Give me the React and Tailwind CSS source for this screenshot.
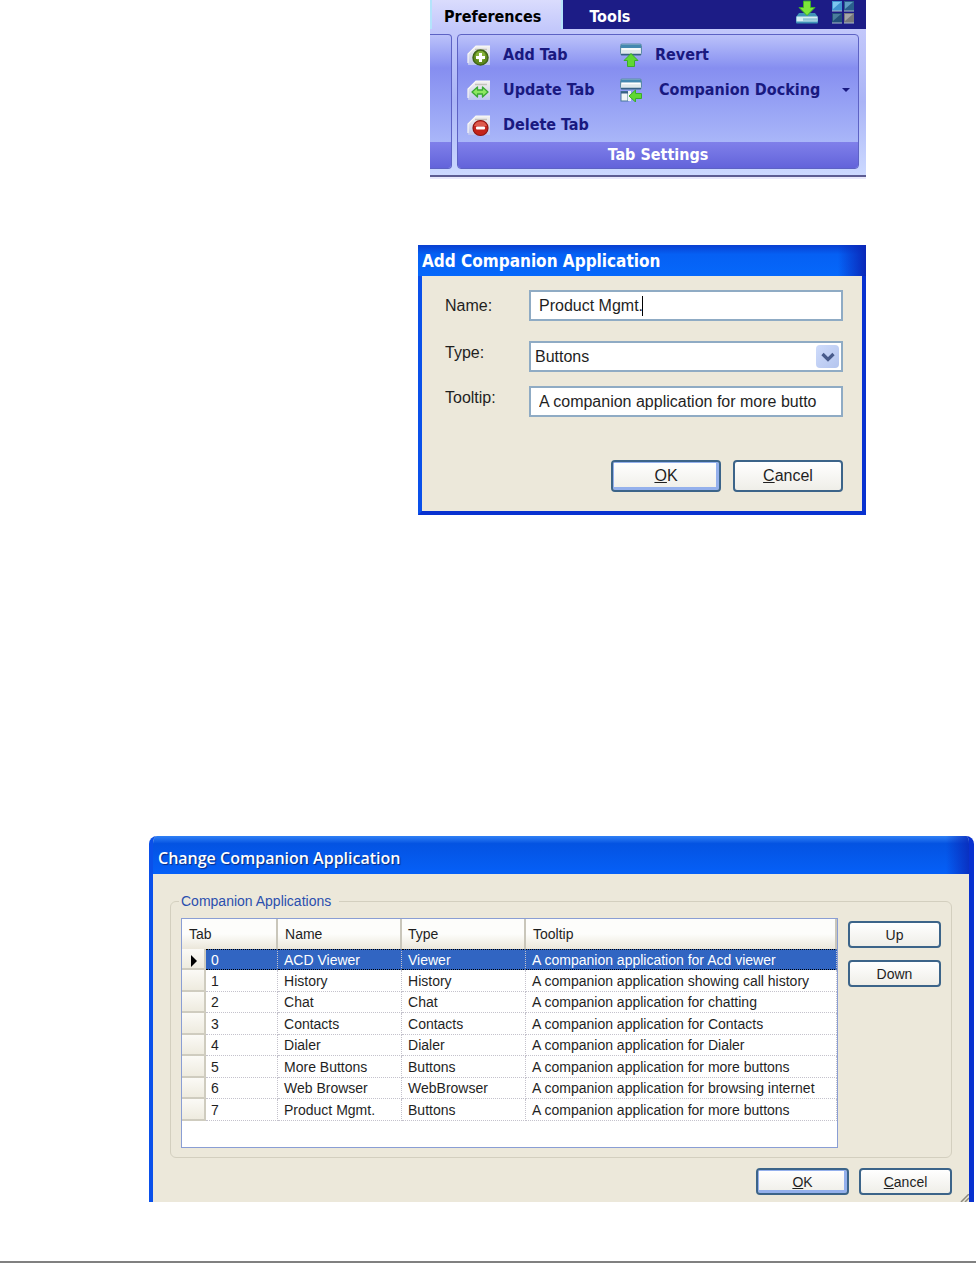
import clsx from "clsx";

const companionApps = [
  { name: "ACD Viewer", type: "Viewer", tooltip: "A companion application for Acd viewer" },
  { name: "History", type: "History", tooltip: "A companion application showing call history" },
  { name: "Chat", type: "Chat", tooltip: "A companion application for chatting" },
  { name: "Contacts", type: "Contacts", tooltip: "A companion application for Contacts" },
  { name: "Dialer", type: "Dialer", tooltip: "A companion application for Dialer" },
  { name: "More Buttons", type: "Buttons", tooltip: "A companion application for more buttons" },
  { name: "Web Browser", type: "WebBrowser", tooltip: "A companion application for browsing internet" },
  { name: "Product Mgmt.", type: "Buttons", tooltip: "A companion application for more buttons" },
];

// the folder-tab shape behind the add / update / delete icons
function TabShape({ id }) {
  return (
    <>
      <defs>
        <linearGradient id={id} x1="0" y1="0" x2="0" y2="1">
          <stop offset="0" stopColor="#f3f2f0" />
          <stop offset="0.6" stopColor="#d6d9ea" />
          <stop offset="1" stopColor="#bcc4f2" />
        </linearGradient>
      </defs>
      <path d="M1 22V11L9 3H23V22Z" fill={`url(#${id})`} />
      <path d="M1 20V11L9 3H23" fill="none" stroke="#faf9f6" strokeWidth="1.2" />
      <path d="M8 6.500H20" stroke="#c5c3bd" strokeWidth="1.5" />
    </>
  );
}

function AddTabIcon() {
  return (
    <svg width="24" height="24" viewBox="0 0 24 24" aria-hidden="true">
      <TabShape id="tab-add" />
      <circle cx="13.500" cy="14.500" r="7.500" fill="#5f8a1c" stroke="#40651a" strokeWidth="1.5" />
      <circle cx="13.500" cy="13" r="5" fill="#86b23a" />
      <path d="M13.500 10V19M9 14.500H18" stroke="#fff" strokeWidth="3" />
    </svg>
  );
}

function UpdateTabIcon() {
  return (
    <svg width="24" height="24" viewBox="0 0 24 24" aria-hidden="true">
      <TabShape id="tab-update" />
      <path
        d="M5 14L10.500 9V12H15.500V9L21 14L15.500 19V16H10.500V19Z"
        fill="#8ce860"
        stroke="#3aa835"
        strokeWidth="1.3"
        strokeLinejoin="round"
      />
    </svg>
  );
}

function DeleteTabIcon() {
  return (
    <svg width="24" height="24" viewBox="0 0 24 24" aria-hidden="true">
      <TabShape id="tab-delete" />
      <circle cx="13.500" cy="15" r="7.500" fill="#c4231b" stroke="#8e1512" strokeWidth="1.2" />
      <path d="M7 13A7 7 0 0 1 20 13Z" fill="#dd5b4e" />
      <rect x="9" y="13.500" width="9" height="3" rx="1" fill="#fff" />
    </svg>
  );
}

function RevertIcon() {
  return (
    <svg width="24" height="24" viewBox="0 0 24 24" aria-hidden="true">
      <rect x="1.500" y="1" width="21" height="11" rx="1.500" fill="#dfe9ec" stroke="#5d8aa8" />
      <path d="M2 1.500H22V5H2Z" fill="#4488b0" />
      <path d="M3 6H21" stroke="#fff" strokeWidth="1.500" />
      <path d="M2 11.500H22" stroke="#376084" strokeWidth="1.500" />
      <path
        d="M12 10.500L19 17.500H15.500V23.500H8.500V17.500H5Z"
        fill="#5fd832"
        stroke="#3aac2c"
        strokeLinejoin="round"
      />
    </svg>
  );
}

function DockingIcon() {
  return (
    <svg width="24" height="24" viewBox="0 0 24 24" aria-hidden="true">
      <rect x="1.500" y="1" width="21" height="10" rx="1.500" fill="#dfe9ec" stroke="#5d8aa8" />
      <path d="M2 1.500H22V4.500H2Z" fill="#4488b0" />
      <path d="M3 5.500H21" stroke="#fff" strokeWidth="1.500" />
      <path d="M2 10.500H22" stroke="#376084" strokeWidth="1.500" />
      <rect x="2" y="13.500" width="7" height="9.500" fill="#f1f5f6" stroke="#47779b" />
      <path d="M2 14.500H9" stroke="#376084" strokeWidth="2" />
      <rect x="9" y="13" width="3" height="10" fill="#eef3f4" />
      <path
        d="M10 18L16.500 12V15.500H22.500V20.500H16.500V24Z"
        fill="#5fd832"
        stroke="#3aac2c"
        strokeLinejoin="round"
      />
    </svg>
  );
}

function DownloadIcon() {
  return (
    <svg width="24" height="24" viewBox="0 0 24 24" aria-hidden="true">
      <path d="M4 13H20L23 17V22Q23 23.500 22 23.500H2Q1 23.500 1 22V17Z" fill="#3f94b8" />
      <path d="M1.500 16.500H22.500V21.500H1.500Z" fill="#d6eef2" />
      <path d="M8 19.500H22" stroke="#8fc5d6" strokeWidth="2.500" />
      <path
        d="M8.500 1H15.500V7.500H20L12 15.500L4 7.500H8.500Z"
        fill="#7de83a"
        stroke="#3fae2c"
        strokeLinejoin="round"
      />
    </svg>
  );
}

function LayoutIcon() {
  return (
    <svg width="24" height="24" viewBox="0 0 24 24" aria-hidden="true">
      <rect x="1" y="1" width="10" height="10" fill="#3f93d0" />
      <path d="M2 2H10L2 9Z" fill="#7cc6f0" />
      <rect x="13" y="1" width="10" height="10" fill="#2a5f8c" />
      <path d="M14 2H22L14 9Z" fill="#5f9dc4" />
      <rect x="1" y="13" width="10" height="10" fill="#234f78" />
      <path d="M2 14H10L2 21Z" fill="#4a7c9c" />
      <rect x="13" y="13" width="10" height="10" fill="#77787c" />
      <path d="M14 14H22L14 21Z" fill="#a5a5a8" />
      <path d="M1 11H11M13 11H23M1 23H11M13 23H23" stroke="#a9b9c9" />
    </svg>
  );
}

function RibbonButton({ icon, children }) {
  return (
    <button type="button" className="flex h-[35px] items-center gap-3 whitespace-nowrap">
      {icon}
      {children}
    </button>
  );
}

function Ribbon() {
  return (
    <section className="mr-[110px] ml-[430px] border-b-2 border-[#e9e9fb] font-['DejaVu_Sans_Condensed','DejaVu_Sans',sans-serif] text-base font-bold">
      <div className="flex h-[29px] bg-[#1c1c86] text-white">
        <button
          type="button"
          className="border-r-2 border-l-2 border-[#b4e4fb] bg-linear-to-b from-[#dadcfd] to-[#c3c8fb] pt-1 pr-5 pl-3 text-black"
        >
          Preferences
        </button>
        <button type="button" className="ml-[26px] pt-1">Tools</button>
        <div className="mr-[11px] ml-auto flex items-start gap-3">
          <button type="button" aria-label="Download"><DownloadIcon /></button>
          <button type="button" aria-label="Layout"><LayoutIcon /></button>
        </div>
      </div>

      <div className="flex h-[148px] gap-[5px] border-b-2 border-[#5c5c92] bg-linear-to-b from-[#c3c8fb] via-[#aab4f6] to-[#ccd9ff] pt-[5px] pr-[7px] pb-[6px]">
        <div className="flex w-[22px] flex-col overflow-hidden rounded-r-sm border border-l-0 border-[#5d62c4] bg-linear-to-b from-[#bcc2fa] via-[#868ef0] via-25% to-[#b6c4fb]">
          <div className="mt-auto h-[26px] bg-linear-to-b from-[#8080ea] to-[#6363da]" />
        </div>
        <div className="flex flex-1 flex-col overflow-hidden rounded-sm border border-[#5d62c4] bg-linear-to-b from-[#bcc2fa] via-[#868ef0] via-25% to-[#b6c4fb]">
          <div className="grid grid-cols-[152px_1fr] pt-[2px] pl-[9px] text-[#191980]">
            <RibbonButton icon={<AddTabIcon />}>Add Tab</RibbonButton>
            <RibbonButton icon={<RevertIcon />}>Revert</RibbonButton>
            <RibbonButton icon={<UpdateTabIcon />}>Update Tab</RibbonButton>
            <button type="button" className="flex h-[35px] items-center gap-4 whitespace-nowrap">
              <DockingIcon />
              Companion Docking
              <svg className="mr-[7px] ml-auto" width="10" height="6" viewBox="0 0 10 6" aria-hidden="true">
                <path d="M1 1H9L5 5Z" fill="#191980" />
              </svg>
            </button>
            <RibbonButton icon={<DeleteTabIcon />}>Delete Tab</RibbonButton>
          </div>
          <div className="mt-auto flex h-[26px] shrink-0 items-center justify-center bg-linear-to-b from-[#8080ea] to-[#6363da] text-white">
            Tab Settings
          </div>
        </div>
      </div>
    </section>
  );
}

function XpButton({ primary, className, children }) {
  return (
    <button
      type="button"
      className={clsx(
        "rounded-[4px] border-2 border-[#3c6489] bg-linear-to-b from-white to-[#efeee8] text-center",
        primary && "shadow-[inset_-1px_-1px_0_2px_#94b0ec]",
        className
      )}
    >
      {children}
    </button>
  );
}

function AddDialog() {
  const field = "block h-[31px] w-full border-2 border-[#8fabc4] bg-white outline-none";
  return (
    <section className="mt-[66px] mr-[110px] ml-[418px] border-r-4 border-b-4 border-l-4 border-r-[#0831d0] border-b-[#0831d0] border-l-[#0a50ea] bg-[#ece8da] font-['Liberation_Sans',Arial,sans-serif] text-base text-[#1f1f1f]">
      <div className="-mx-1 flex h-[31px] justify-between bg-linear-to-b from-[#0a3fd0] via-[#0560f4] via-30% to-[#0668fb]">
        <h2 className="pt-1 pl-1 font-['DejaVu_Sans_Condensed','DejaVu_Sans',sans-serif] text-[17px] font-bold text-white">
          Add Companion Application
        </h2>
        <div className="w-7 bg-linear-to-r from-transparent to-[#0a28b8]" />
      </div>
      <form className="pt-[14px] pr-[19px] pb-[19px] pl-[23px]">
        <div className="grid grid-cols-[84px_1fr]">
          <label htmlFor="app-name" className="pt-1">Name:</label>
          <div className="relative mb-5">
            <input id="app-name" className={clsx(field, "pl-2")} defaultValue="Product Mgmt." />
            {/* text cursor */}
            <span className="absolute top-[6px] left-[113px] h-5 w-px bg-black" />
          </div>
          <label htmlFor="app-type">Type:</label>
          <div className="relative mb-[14px]">
            <select id="app-type" className={clsx(field, "appearance-none pl-1")} defaultValue="Buttons">
              <option>Buttons</option>
              <option>Viewer</option>
              <option>History</option>
            </select>
            <span className="pointer-events-none absolute top-1 right-1 flex size-[23px] items-center justify-center rounded-sm bg-linear-to-br from-[#cfdcfb] to-[#b3c4ee]">
              <svg width="14" height="10" viewBox="0 0 14 10" aria-hidden="true">
                <path d="M1.500 2L7 7.500L12.500 2" fill="none" stroke="#485b8c" strokeWidth="3.200" />
              </svg>
            </span>
          </div>
          <label htmlFor="app-tooltip">Tooltip:</label>
          <input
            id="app-tooltip"
            className={clsx(field, "pl-2")}
            defaultValue="A companion application for more butto"
          />
        </div>
        <div className="mt-[43px] flex justify-end gap-3">
          <XpButton primary className="h-8 w-[110px]"><u>O</u>K</XpButton>
          <XpButton className="h-8 w-[110px]"><u>C</u>ancel</XpButton>
        </div>
      </form>
    </section>
  );
}

function AppTable() {
  const th = "border-r-2 border-r-[#c9c6ba] text-left font-normal";
  const td = "border-r border-b border-dotted border-[#c4c2cc]";
  return (
    <div className="h-[230px] flex-1 border border-[#8a9ed4] bg-white">
      <table className="w-full table-fixed border-separate border-spacing-0 whitespace-nowrap">
        <colgroup>
          <col className="w-6" />
          <col className="w-[72px]" />
          <col className="w-[124px]" />
          <col className="w-[124px]" />
          <col />
        </colgroup>
        <thead>
          <tr className="h-[30px] bg-linear-to-b from-[#fdfdfb] from-50% to-[#ebe7da]">
            <th scope="col" colSpan={2} className={clsx(th, "pl-[7px]")}>Tab</th>
            <th scope="col" className={clsx(th, "pl-[7px]")}>Name</th>
            <th scope="col" className={clsx(th, "pl-[6px]")}>Type</th>
            <th scope="col" className={clsx(th, "pl-[7px]")}>Tooltip</th>
          </tr>
        </thead>
        <tbody>
          {companionApps.map((app, i) => (
            <tr
              key={app.name}
              className={clsx(
                "leading-4 odd:h-[21px] even:h-[22px]",
                i === 0 && "bg-[#3165c2] text-white"
              )}
            >
              <td className="border-r-2 border-b-2 border-[#cfccbf] bg-linear-to-b from-[#fbfaf6] to-[#eeebdf]">
                {i === 0 && (
                  <svg className="mt-1 ml-2" width="8" height="12" viewBox="0 0 8 12" aria-hidden="true">
                    <path d="M1 0L7 6L1 12Z" fill="#000" />
                  </svg>
                )}
              </td>
              <td className={clsx(td, "pl-[5px]", i === 0 && "border-t border-t-black border-b-black")}>{i}</td>
              <td className={clsx(td, "pl-[6px]", i === 0 && "border-t border-t-black border-b-black")}>{app.name}</td>
              <td className={clsx(td, "pl-[6px]", i === 0 && "border-t border-t-black border-b-black")}>{app.type}</td>
              <td className={clsx(td, "pl-[6px]", i === 0 && "border-t border-t-black border-b-black")}>{app.tooltip}</td>
            </tr>
          ))}
        </tbody>
      </table>
    </div>
  );
}

function ChangeDialog() {
  return (
    <section className="mt-[321px] mr-[2px] ml-[149px] overflow-hidden rounded-t-lg border-r-5 border-l-4 border-r-[#0831d0] border-l-[#0a50ea] bg-[#ece8da] font-['Liberation_Sans',Arial,sans-serif] text-sm text-[#1f1f1f]">
      <div className="-mr-[5px] -ml-1 flex h-[38px] justify-between bg-linear-to-b from-[#2f80f5] via-[#0453e2] via-20% to-[#0560f8]">
        <h2 className="pt-[10px] pl-[9px] font-['Open_Sans','Noto_Sans',sans-serif] text-base font-semibold text-white text-shadow-[1px_1px_1px_#0a2a80]">
          Change Companion Application
        </h2>
        <div className="w-7 bg-linear-to-r from-transparent to-[#0a28b8]" />
      </div>
      <div className="relative pt-[17px] pr-[17px] pb-[7px] pl-[17px]">
        <fieldset className="rounded-md border border-[#d3cfbf] pr-[10px] pb-[9px] pl-[10px]">
          <legend className="-ml-[2px] pr-2 pl-[2px] text-[#2b4fae]">Companion Applications</legend>
          <div className="mt-[7px] flex gap-[10px]">
            <AppTable />
            <div className="flex flex-col gap-3 pt-[3px]">
              <XpButton className="h-[27px] w-[93px]">Up</XpButton>
              <XpButton className="h-[27px] w-[93px]">Down</XpButton>
            </div>
          </div>
        </fieldset>
        <div className="mt-[10px] flex justify-end gap-[10px]">
          <XpButton primary className="h-[27px] w-[93px]"><u>O</u>K</XpButton>
          <XpButton className="h-[27px] w-[93px]"><u>C</u>ancel</XpButton>
        </div>
        {/* resize grip */}
        <svg className="absolute right-0 bottom-0" width="9" height="8" viewBox="0 0 9 8" aria-hidden="true">
          <path d="M1 8L9 0M5 8L9 4" stroke="#8d8a7e" strokeWidth="1.500" />
        </svg>
      </div>
    </section>
  );
}

export default function App() {
  return (
    <main className="bg-white">
      <Ribbon />
      <AddDialog />
      <ChangeDialog />
      <hr className="mt-[59px] border-t-2 border-[#808080]" />
    </main>
  );
}
